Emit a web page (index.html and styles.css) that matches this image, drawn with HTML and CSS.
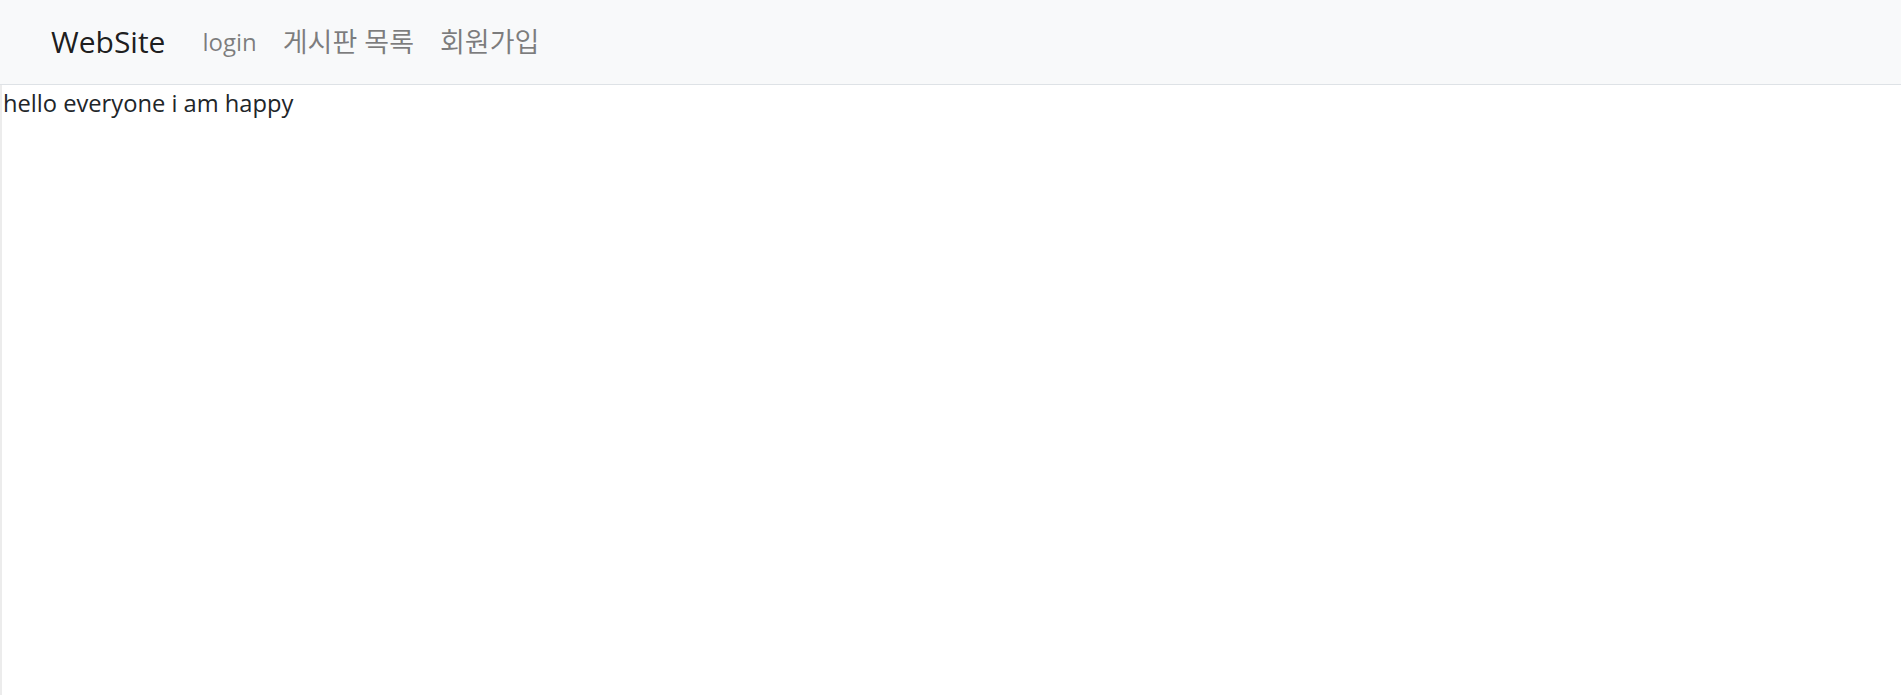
FILE: index.html
```html
<!DOCTYPE html>
<html lang="ko">
<head>
<meta charset="utf-8">
<title>WebSite</title>
<link rel="stylesheet" href="styles.css">
</head>
<body>
<nav class="navbar">
  <div class="nav-inner">
    <a class="brand" href="#">WebSite</a>
    <ul class="nav-links">
      <li><a class="nav-link" href="#">login</a></li>
      <li><a class="nav-link nav-link-ko" href="#">게시판 목록</a></li>
      <li><a class="nav-link nav-link-ko" href="#">회원가입</a></li>
    </ul>
  </div>
</nav>
<main class="content">hello everyone i am happy</main>
</body>
</html>
```
FILE: styles.css
```css
html, body {
  margin: 0;
  padding: 0;
}
body {
  font-family: "Open Sans", "Noto Sans CJK KR", sans-serif;
  font-size: 24px;
  line-height: 1.5;
  color: #212529;
  background: #fff;
}
.navbar {
  background: #f8f9fa;
  border-bottom: 1px solid #dee2e6;
  padding: 12px 24px;
}
.nav-inner {
  display: flex;
  align-items: center;
  padding: 0 27px;
}
.brand {
  font-size: 30px;
  line-height: 45px;
  padding: 7px 0 8px;
  margin-right: 24px;
  color: rgba(0, 0, 0, 0.9);
  text-decoration: none;
}
.nav-links {
  display: flex;
  align-items: center;
  list-style: none;
  margin: 0;
  padding: 0;
}
.nav-link {
  display: block;
  padding: 12px 13px;
  line-height: 36px;
  color: rgba(0, 0, 0, 0.5);
  text-decoration: none;
}
.nav-link-ko {
  font-size: 27px;
}
.content {
  display: block;
  min-height: calc(100vh - 85px);
  border-left: 2px solid #ececec;
  padding: 1px 0 0 1px;
  font-size: 23.7px;
  box-sizing: border-box;
}
```
